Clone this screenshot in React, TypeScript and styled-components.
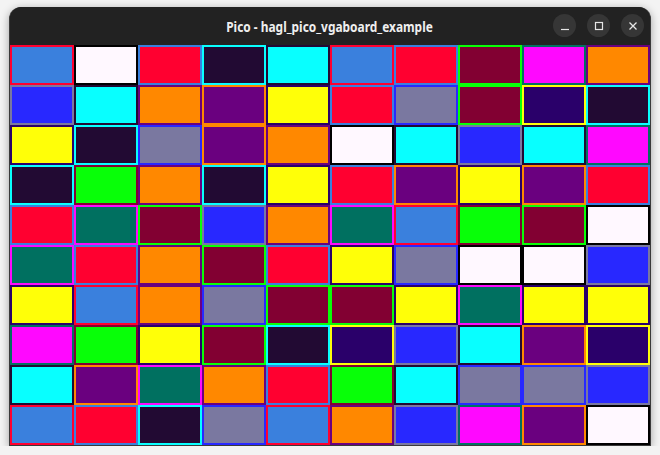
import React from 'react'
import styled, {createGlobalStyle} from 'styled-components'

const palette: Record<string, string> = {
  A: '#3a80dd',
  W: '#fff8ff',
  R: '#ff0030',
  D: '#220a33',
  C: '#08ffff',
  M: '#820032',
  L: '#08ff08',
  P: '#ff08ff',
  T: '#007060',
  O: '#ff8800',
  V: '#6a007f',
  B: '#2828ff',
  G: '#7a78a0',
  N: '#2a006a',
  Y: '#ffff08',
  K: '#000000',
}

// every fill has its own fixed outline colour
const outlineOf: Record<string, string> = {
  A: 'R', W: 'K', R: 'A', D: 'C', C: 'D', M: 'L', L: 'M', P: 'T',
  T: 'P', O: 'V', V: 'O', B: 'G', G: 'B', Y: 'N', N: 'Y',
}

const rows = [
  'AWRDCARMPO',
  'BCOVYRGMND',
  'YDGVOWCBCP',
  'DLODYRVYVR',
  'RTMBOTALMW',
  'TROMRYGWWB',
  'YAOGMMYTYY',
  'PLYMDNBCVN',
  'CVTORLCGGB',
  'ARDGAOBPVW',
]

const GlobalStyle = createGlobalStyle`
  html, body {
    margin: 0;
    padding: 0;
    background: #f3f3f3;
    font-family: "Noto Sans", "Liberation Sans", sans-serif;
  }
`

export default function App() {
  return (
    <>
      <GlobalStyle />
      <Desktop>
        <Window>
          <TitleBar>
            <Title>Pico - hagl_pico_vgaboard_example</Title>
            <Controls>
              <CircleButton aria-label="minimize">
                <svg width="10" height="10" viewBox="0 0 10 10">
                  <path d="M1 8.5h8" stroke="#e6e6e6" strokeWidth="1.2" />
                </svg>
              </CircleButton>
              <CircleButton aria-label="maximize">
                <svg width="10" height="10" viewBox="0 0 10 10">
                  <rect x="1.5" y="1.5" width="7" height="7" fill="none" stroke="#e6e6e6" strokeWidth="1.2" />
                </svg>
              </CircleButton>
              <CircleButton aria-label="close">
                <svg width="10" height="10" viewBox="0 0 10 10">
                  <path d="M1.5 1.5l7 7M8.5 1.5l-7 7" stroke="#e6e6e6" strokeWidth="1.3" />
                </svg>
              </CircleButton>
            </Controls>
          </TitleBar>
          <Screen>
            {rows.map((row, r) =>
              row.split('').map((c, i) => (
                <Tile key={`${r}-${i}`} fill={palette[c]} outline={palette[outlineOf[c]]} />
              ))
            )}
          </Screen>
        </Window>
      </Desktop>
    </>
  )
}

const Desktop = styled.div`
  padding: 7px 0 0 9px;
`

const Window = styled.div`
  width: 642px;
  background: #222;
  border: 1px solid #3a3a3a;
  border-top: none;
  border-radius: 12px 12px 0 0;
  box-shadow: 0 2px 9px rgba(0, 0, 0, 0.35);
  box-sizing: border-box;
`

const TitleBar = styled.div`
  position: relative;
  display: flex;
  align-items: center;
  justify-content: center;
  height: 38px;
  background: #222;
  border-radius: 12px 12px 0 0;
`

const Title = styled.div`
  display: inline-block;
  color: #efefef;
  font-size: 14px;
  font-weight: 700;
  transform: scaleX(0.85);
  margin-top: 0;
`

const Controls = styled.div`
  position: absolute;
  right: 6px;
  top: 7px;
  display: flex;
  gap: 11px;
`

const CircleButton = styled.div`
  width: 23px;
  height: 23px;
  border-radius: 50%;
  background: #363636;
  display: flex;
  align-items: center;
  justify-content: center;
`

const Screen = styled.div`
  display: grid;
  grid-template-columns: repeat(10, 64px);
  grid-auto-rows: 40px;
  width: 640px;
`

const Tile = styled.div<{fill: string; outline: string}>`
  box-sizing: border-box;
  background: ${({fill}) => fill};
  border: 2px solid ${({outline}) => outline};
`
